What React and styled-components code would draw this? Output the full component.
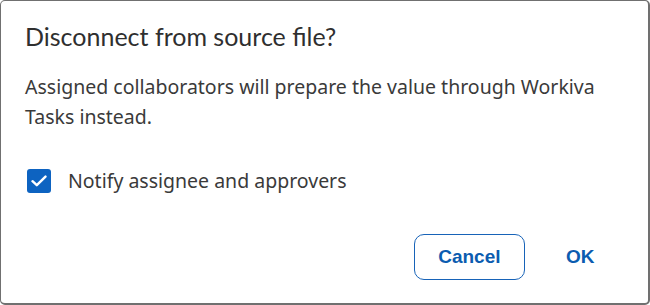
import React, { useState } from 'react';
import styled, { createGlobalStyle } from 'styled-components';

const Global = createGlobalStyle`
  html, body {
    margin: 0;
    padding: 0;
    background: #ffffff;
  }
  * {
    box-sizing: border-box;
  }
`;

const Dialog = styled.div`
  width: 650px;
  height: 305px;
  display: flex;
  flex-direction: column;
  background: #ffffff;
  border: 1px solid #707070;
  border-right-width: 2px;
  border-bottom-width: 2px;
  border-radius: 5px;
  padding: 19px 28px 23px 24px;
  font-family: "Noto Sans", "Liberation Sans", sans-serif;
  color: #333333;
`;

const Title = styled.h2`
  margin: 0;
  font-family: Lato, "Liberation Sans", sans-serif;
  font-size: 25px;
  font-weight: 400;
  line-height: 32px;
  color: #2f2f2f;
`;

const Message = styled.p`
  margin: 20px 0 0;
  max-width: 592px;
  font-size: 19.5px;
  line-height: 30px;
  color: #3a3a3a;
`;

const CheckRow = styled.label`
  display: flex;
  align-items: center;
  gap: 17px;
  margin-top: 34px;
  padding-left: 2px;
  font-size: 19.5px;
  line-height: 30px;
  color: #3a3a3a;
  cursor: pointer;
`;

const Box = styled.span`
  width: 24px;
  height: 24px;
  border-radius: 3px;
  display: flex;
  align-items: center;
  justify-content: center;
  background: ${p => (p.checked ? '#0d63c1' : '#ffffff')};
  border: ${p => (p.checked ? 'none' : '2px solid #6b6b6b')};
`;

const Footer = styled.div`
  margin-top: auto;
  display: flex;
  justify-content: flex-end;
  align-items: center;
  gap: 16px;
`;

const Button = styled.button`
  height: 46px;
  padding: 0 ${p => (p.outlined ? '23px' : '24.5px')};
  border-radius: 10px;
  border: 1.5px solid ${p => (p.outlined ? '#1763b8' : 'transparent')};
  background: #ffffff;
  color: #0b5cb0;
  font-family: "Liberation Sans", Arial, sans-serif;
  font-weight: 700;
  font-size: 19px;
  cursor: pointer;
`;

export default function App() {
  const [notify, setNotify] = useState(true);
  return (
    <>
      <Global />
      <Dialog>
        <Title>Disconnect from source file?</Title>
        <Message>
          Assigned collaborators will prepare the value through Workiva Tasks instead.
        </Message>
        <CheckRow onClick={() => setNotify(!notify)}>
          <Box checked={notify}>
            {notify && (
              <svg width="16" height="12" viewBox="0 0 16 12" fill="none">
                <path d="M1.5 6.2 L5.8 10.2 L14.5 1.6" stroke="#ffffff" strokeWidth="2.4" strokeLinecap="round" strokeLinejoin="round" />
              </svg>
            )}
          </Box>
          Notify assignee and approvers
        </CheckRow>
        <Footer>
          <Button outlined>Cancel</Button>
          <Button>OK</Button>
        </Footer>
      </Dialog>
    </>
  );
}
